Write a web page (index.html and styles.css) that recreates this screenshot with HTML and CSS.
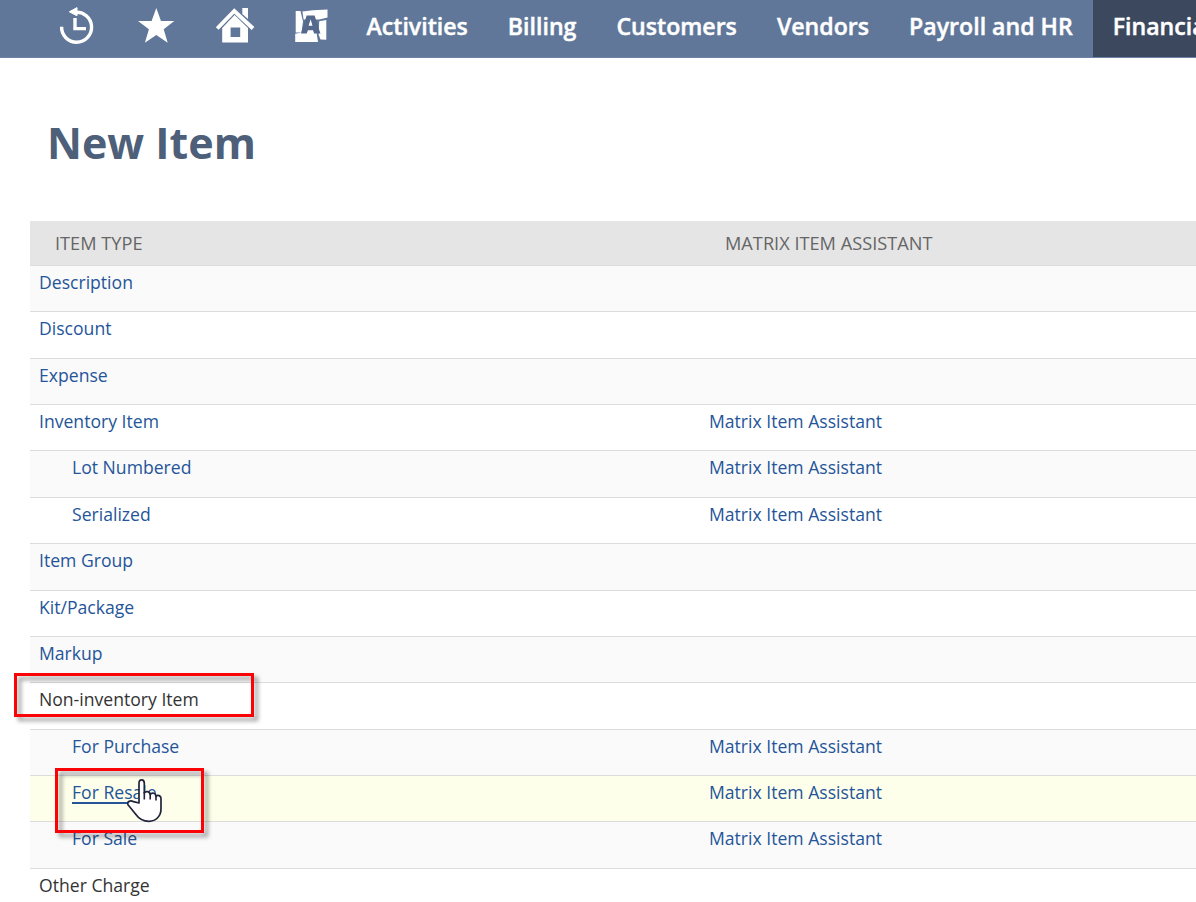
FILE: index.html
```html
<!DOCTYPE html>
<html lang="en">
<head>
<meta charset="utf-8">
<title>New Item</title>
<link rel="stylesheet" href="styles.css">
</head>
<body>
<nav class="navbar">
  <div class="nav-icons">
    <a class="nav-icon"><svg viewBox="0 0 40 40"><path d="M4.6 18.8A15 15 0 1 0 18.5 4.3" fill="none" stroke="#fff" stroke-width="3.4"/><path d="M12.3 3.8 20-.4V7.8Z" fill="#fff" stroke="#fff" stroke-linejoin="round"/><path d="M18 10V20.6H29" fill="none" stroke="#fff" stroke-width="3.4"/></svg></a>
    <a class="nav-icon"><svg viewBox="0 0 40 40"><path d="M20.3 0 25 13H38.3L27.7 21.2 31.7 34.7 20.3 26.9 8.9 34.7 12.9 21.2 2 13H15.6Z" fill="#fff"/></svg></a>
    <a class="nav-icon"><svg viewBox="0 0 40 40"><path d="M27.3 0H33V11L27.3 6Z" fill="#fff"/><path d="M2.2 20.5 19.3 3 38 20.5" fill="none" stroke="#fff" stroke-width="3.9"/><path fill-rule="evenodd" d="M19.6 7 33 20V34.5H7.2V20ZM15.6 19.5V29H25.2V19.5Z" fill="#fff"/></svg></a>
    <a class="nav-icon"><svg viewBox="0 0 40 40"><path d="M1.7 3H6.5L9 13.5 7.5 24.5H1.7ZM8.4 3.4 19 2.2 33.5 1.6V9.6L25.3 11.6H9.6ZM1.2 25.8 8 24.6H22.5L24 34H1.2ZM25.2 13.2 32.3 12V31.7L26.5 31.5 24.6 26.4Z" fill="#fff"/><path fill-rule="evenodd" d="M12.6 7.6H20.6L26.4 25.4H19.9L19 22H13.8L12.7 25.4H7ZM14.8 17.6H18.2L16.6 12Z" fill="#54698b"/><path d="M14.6 17.8 16.6 11.2 18.5 17.8ZM13.9 22.3H19L20 25.5H12.9Z" fill="#fff"/></svg></a>
  </div>
  <a class="nav-link">Activities</a>
  <a class="nav-link">Billing</a>
  <a class="nav-link">Customers</a>
  <a class="nav-link">Vendors</a>
  <a class="nav-link">Payroll and HR</a>
  <a class="nav-link nav-link-active">Financial</a>
</nav>
<main class="content">
  <h1 class="title">New Item</h1>
  <div class="table">
    <div class="head"><span>ITEM TYPE</span><span>MATRIX ITEM ASSISTANT</span></div>
    <div class="row"><a>Description</a></div>
    <div class="row"><a>Discount</a></div>
    <div class="row"><a>Expense</a></div>
    <div class="row"><a>Inventory Item</a><a>Matrix Item Assistant</a></div>
    <div class="row sub"><a>Lot Numbered</a><a>Matrix Item Assistant</a></div>
    <div class="row sub"><a>Serialized</a><a>Matrix Item Assistant</a></div>
    <div class="row"><a>Item Group</a></div>
    <div class="row"><a>Kit/Package</a></div>
    <div class="row"><a>Markup</a></div>
    <div class="row marked"><span>Non-inventory Item</span><i class="callout callout-group"></i></div>
    <div class="row sub"><a>For Purchase</a><a>Matrix Item Assistant</a></div>
    <div class="row sub marked hovered"><a><u>For Resale</u></a><a>Matrix Item Assistant</a><i class="callout callout-item"></i><svg class="pointer" viewBox="0 0 36 46"><path d="M12 25V5.2C12 .7 17.3.7 17.3 5.2V15C18.5 12.8 22.8 13 23.2 16.4 25 14.2 28.8 15 29 18.3 30.5 16.7 34 17.5 34 20.5V31C34 38 29 43.3 22 43.3 16 43.3 12 41 8.5 36L1 26.7C-.3 23.5 3.5 22 6.5 23.7Z" fill="#fff" stroke="#20243a" stroke-width="1.7" stroke-linejoin="round"/><path d="M17.3 14V21.5M23.2 16V21.5M29 18V22.5" stroke="#20243a" stroke-width="1.6"/></svg></div>
    <div class="row sub"><a>For Sale</a><a>Matrix Item Assistant</a></div>
    <div class="row"><span>Other Charge</span></div>
  </div>
</main>
</body>
</html>
```
FILE: styles.css
```css
* { box-sizing: border-box; }
body {
  margin: 0;
  height: 902px;
  overflow: hidden;
  background: #fff;
  font-family: "Open Sans", sans-serif;
  color: #333;
}
.navbar {
  display: flex;
  height: 58px;
  overflow: hidden;
  background: #607799;
  border-bottom: 1px solid #6e84a6;
}
.nav-icons {
  display: flex;
  flex: none;
  gap: 39px;
  width: 346.5px;
  padding: 8px 0 0 57px;
}
.nav-icon, .nav-icon svg { display: block; width: 40px; height: 40px; }
.nav-icon svg { overflow: visible; }
.nav-link {
  flex: none;
  height: 58px;
  padding: 0 20px;
  font-size: 23.13px;
  font-weight: 600;
  -webkit-text-stroke: .45px #fff;
  line-height: 53px;
  white-space: nowrap;
  color: #fff;
}
.nav-link-active { background: #3c485e; }
.content { padding-left: 30px; }
.title {
  margin: 0;
  height: 163px;
  padding: 55px 0 0 17px;
  font-size: 43px;
  font-weight: 700;
  line-height: 60px;
  color: #4d5f79;
}
.head, .row {
  display: grid;
  grid-template-columns: 670px 1fr;
  border-bottom: 1px solid #dcdcdc;
}
.head {
  height: 45px;
  padding-left: 25px;
  background: #e5e5e5;
  font-size: 18.2px;
  line-height: 44px;
  color: #666;
}
.row {
  height: 46.36px;
  padding-left: 9px;
  font-size: 17.6px;
  line-height: 32.4px;
  background: #fff;
}
.row:nth-child(even) { background: #fafafa; }
.row a { color: #255599; }
.sub > :first-child { padding-left: 33px; }
.marked { position: relative; }
.row.hovered { background: #fdffeb; }
.row u { text-underline-offset: 3px; text-decoration-thickness: 1.5px; }
.callout {
  position: absolute;
  z-index: 1;
  border: 3px solid #fb0207;
  filter: drop-shadow(4px 4px 2px rgba(0, 0, 0, .4));
}
.callout-group { left: -16px; top: -10px; width: 240px; height: 44px; }
.callout-item { left: 25px; top: -8px; width: 149px; height: 65px; }
.pointer { position: absolute; z-index: 2; left: 97px; top: 2px; width: 36px; height: 46px; }
```
